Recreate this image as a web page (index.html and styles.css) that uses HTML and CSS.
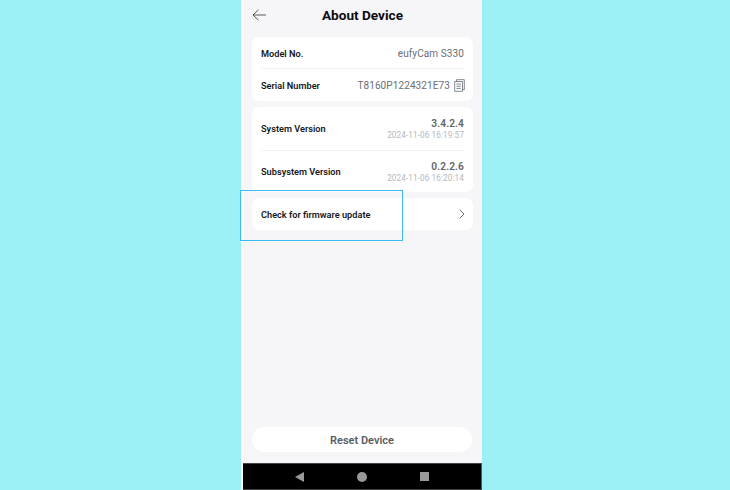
FILE: index.html
```html
<!DOCTYPE html>
<html lang="en">
<head>
<meta charset="utf-8">
<title>About Device</title>
<link rel="stylesheet" href="styles.css">
</head>
<body>
<div class="frame">
<main class="phone">
  <header class="topbar">
    <svg class="back" width="15" height="12" viewBox="0 0 15 12"><path d="M14 6H1M6.5 .8 1 6l5.5 5.2" fill="none" stroke="#555a60" stroke-width="1"/></svg>
    <h1>About Device</h1>
  </header>
  <div class="content">
    <section class="card">
      <div class="row model first">
        <span class="label">Model No.</span>
        <span class="value">eufyCam S330</span>
      </div>
      <div class="row short">
        <span class="label">Serial Number</span>
        <span class="value serial">T8160P1224321E73
          <svg class="copy" width="11" height="13" viewBox="0 0 11 13"><path d="M2.5 2.5V.7h7.8v10H8.5M.7 2.5h7.8v9.8H.7zM2.4 5h4.4M2.4 7.2h4.4M2.4 9.4h4.4" fill="none" stroke="#777b80" stroke-width=".9"/></svg>
        </span>
      </div>
    </section>
    <section class="card">
      <div class="row tall first">
        <span class="label">System Version</span>
        <div class="version"><strong>3.4.2.4</strong><small>2024-11-06 16:19:57</small></div>
      </div>
      <div class="row tall">
        <span class="label">Subsystem Version</span>
        <div class="version"><strong>0.2.2.6</strong><small>2024-11-06 16:20:14</small></div>
      </div>
    </section>
    <section class="card update">
      <span class="label">Check for firmware update</span>
      <svg width="6" height="10" viewBox="0 0 6 10"><path d="M.8.8 5 5 .8 9.2" fill="none" stroke="#666a70" stroke-width="1"/></svg>
    </section>
    <div class="highlight"></div>
  </div>
  <button class="reset" type="button">Reset Device</button>
  <nav class="navbar">
    <span class="tri"></span>
    <span class="dot"></span>
    <span class="sq"></span>
  </nav>
</main>
</div>
</body>
</html>
```
FILE: styles.css
```css
* { box-sizing: border-box; }
html, body { margin: 0; height: 100%; }
body {
  width: 730px;
  height: 490px;
  overflow: hidden;
  background: #9befF5;
  padding-left: 241px;
  font-family: Roboto, "Liberation Sans", sans-serif;
}
.frame {
  width: 241px;
  height: 490px;
  padding-left: 2px;
  background: #fff;
}
.phone {
  width: 239px;
  height: 490px;
  background: #f6f6f9;
  display: flex;
  flex-direction: column;
  position: relative;
}
.topbar {
  height: 37px;
  position: relative;
  display: flex;
  align-items: center;
  justify-content: center;
  flex: none;
}
.topbar h1 {
  margin: 0 0 8px;
  font-size: 13.6px;
  font-weight: 700;
  color: #0c0d10;
}
.back { position: absolute; left: 9px; top: 9px; }
.content {
  padding: 0 9px;
  display: flex;
  flex-direction: column;
  gap: 6px;
  position: relative;
  flex: 1;
}
.card {
  background: #fff;
  border-radius: 7px;
  padding: 0 9px;
}
.row {
  display: flex;
  align-items: center;
  justify-content: space-between;
  border-top: 1px solid #f1f1f3;
}
.row.first { border-top: 0; }
.model { height: 31px; padding-top: 1px; }
.short { height: 33px; }
.tall { height: 42.5px; }
.label {
  font-size: 9.2px;
  font-weight: 600;
  color: #17181c;
}
.value {
  font-size: 10px;
  font-weight: 400;
  letter-spacing: .1px;
  color: #6a6e73;
}
.serial { display: flex; align-items: center; gap: 4px; }
.copy { margin-right: -1px; }
.version {
  display: flex;
  flex-direction: column;
  align-items: flex-end;
  gap: 1px;
  padding-top: 2px;
}
.version strong {
  font-size: 10.2px;
  font-weight: 600;
  letter-spacing: .1px;
  color: #62666c;
}
.version small {
  font-size: 8.2px;
  letter-spacing: .1px;
  color: #b6b8bc;
}
.update {
  height: 32px;
  display: flex;
  align-items: center;
  justify-content: space-between;
  padding-right: 8px;
}
.highlight {
  position: absolute;
  left: -3px;
  top: 153px;
  width: 163px;
  height: 51px;
  border: 1px solid #3dbcf0;
}
.reset {
  flex: none;
  width: 220px;
  height: 25px;
  margin: 0 0 11px 9px;
  border: 0;
  border-radius: 13px;
  background: #fff;
  color: #595d63;
  padding-top: 2px;
  font: 600 11px Roboto, "Liberation Sans", sans-serif;
}
.navbar {
  flex: none;
  height: 27px;
  background: #000;
  border-top: 1px solid #444;
  border-right: 1px solid #555;
  border-bottom: 1px solid #444;
  display: flex;
  align-items: center;
  justify-content: center;
  gap: 53px;
}
.tri {
  width: 0;
  height: 0;
  border-style: solid;
  border-width: 5px 9px 5px 0;
  border-color: transparent #999 transparent transparent;
}
.dot { width: 10px; height: 10px; border-radius: 50%; background: #999; }
.sq { width: 9px; height: 9px; background: #999; }
```
